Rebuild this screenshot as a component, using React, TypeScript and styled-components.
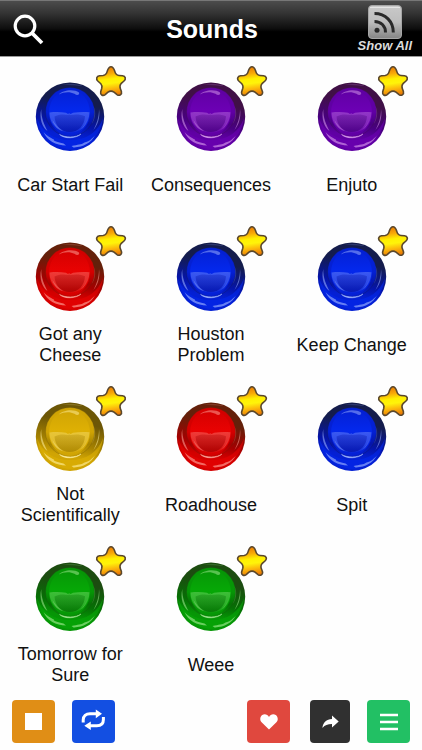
import React, { useId } from 'react';
import styled, { createGlobalStyle } from 'styled-components';

const GlobalStyle = createGlobalStyle`
  *, *::before, *::after { box-sizing: border-box; }
  body {
    margin: 0;
    background: #fefefe;
    color: #111;
    font-family: "Liberation Sans", Helvetica, Arial, sans-serif;
  }
  button { font: inherit; color: inherit; border: 0; padding: 0; background: none; cursor: pointer; }
  svg { display: block; }
`;

const Screen = styled.div`
  display: flex;
  flex-direction: column;
  min-height: 100vh;
`;

const Header = styled.header`
  display: grid;
  grid-template-columns: 1fr auto 1fr;
  align-items: center;
  height: 57px;
  padding: 0 10px 0 12px;
  color: #fff;
  border-top: 1px solid #777;
  border-bottom: 1px solid #999;
  background: linear-gradient(#4c4c4c 0%, #343434 22%, #0e0e0e 50%, #000 56%, #000 100%);
`;

const Title = styled.h1`
  margin: 0;
  font-size: 25px;
  line-height: 30px;
  font-weight: 700;
`;

const SearchButton = styled.button`
  justify-self: start;
`;

const ShowAllButton = styled.button`
  justify-self: end;
  display: flex;
  flex-direction: column;
  align-items: center;
  color: #dcdcdc;
  font-size: 13px;
  line-height: 13px;
  font-weight: 700;
  font-style: italic;
`;

const SoundGrid = styled.main`
  display: grid;
  grid-template-columns: repeat(3, 1fr);
  grid-auto-rows: 160px;
`;

const SoundButton = styled.button`
  display: flex;
  flex-direction: column;
  align-items: center;
  justify-content: flex-start;
  gap: 11px;
  padding-top: 25px;
`;

const GemBox = styled.span`
  position: relative;
  width: 70px;
  height: 70px;
`;

const StarBadge = styled.span`
  position: absolute;
  top: -17px;
  right: -22px;
`;

const Label = styled.span`
  display: flex;
  align-items: center;
  justify-content: center;
  max-width: 126px;
  height: 44px;
  font-size: 18px;
  line-height: 21px;
  text-align: center;
`;

const Footer = styled.footer`
  display: flex;
  justify-content: space-between;
  padding: 3px 12px 7px;
`;

const Group = styled.div<{ $gap: number }>`
  display: flex;
  gap: ${(p) => p.$gap}px;
`;

const ToolButton = styled.button<{ $color: string; $width?: number }>`
  display: grid;
  place-items: center;
  width: ${(p) => p.$width ?? 43}px;
  height: 43px;
  border-radius: 4px;
  color: #fff;
  background: ${(p) => p.$color};
`;

type Hue = 'blue' | 'purple' | 'red' | 'gold' | 'green';

const hues: Record<Hue, { rim: string; deep: string; base: string; glow: string; shine: string }> = {
  blue: { rim: '#141c4c', deep: '#0514a8', base: '#0420d4', glow: '#0428ec', shine: '#a4b8ff' },
  purple: { rim: '#401046', deep: '#480080', base: '#6000a4', glow: '#6c00b4', shine: '#dca0ee' },
  red: { rim: '#64200a', deep: '#a40000', base: '#d40000', glow: '#e80202', shine: '#ffaaa0' },
  gold: { rim: '#6c5606', deep: '#a68200', base: '#d0a404', glow: '#deb004', shine: '#fff0a0' },
  green: { rim: '#1c4c10', deep: '#057004', base: '#069606', glow: '#06a806', shine: '#a8eb98' },
};

function Gem({ hue }: { hue: Hue }) {
  const id = useId();
  const c = hues[hue];
  return (
    <svg width="70" height="70" viewBox="0 0 70 70" aria-hidden="true">
      <defs>
        <linearGradient id={`${id}o`} x1="0.6" y1="0" x2="0.4" y2="1">
          <stop offset="0" stopColor={c.rim} />
          <stop offset="0.28" stopColor={c.rim} />
          <stop offset="0.6" stopColor={c.deep} />
          <stop offset="0.78" stopColor={c.base} />
          <stop offset="1" stopColor={c.base} />
        </linearGradient>
        <linearGradient id={`${id}r`} x1="0" y1="0" x2="0" y2="1">
          <stop offset="0" stopColor={c.base} />
          <stop offset="0.5" stopColor={c.base} />
          <stop offset="0.75" stopColor={c.deep} />
          <stop offset="1" stopColor={c.base} />
        </linearGradient>
        <linearGradient id={`${id}d`} x1="0" y1="0" x2="0" y2="1">
          <stop offset="0" stopColor={c.base} />
          <stop offset="0.45" stopColor={c.glow} />
          <stop offset="1" stopColor={c.base} />
        </linearGradient>
        <linearGradient id={`${id}b`} x1="0" y1="0" x2="0" y2="1">
          <stop offset="0" stopColor={c.shine} stopOpacity="0.34" />
          <stop offset="0.6" stopColor={c.shine} stopOpacity="0.24" />
          <stop offset="1" stopColor={c.shine} stopOpacity="0.06" />
        </linearGradient>
        <linearGradient id={`${id}p`} x1="0" y1="0" x2="0" y2="1">
          <stop offset="0" stopColor={c.deep} stopOpacity="0.3" />
          <stop offset="1" stopColor={c.deep} stopOpacity="0.75" />
        </linearGradient>
      </defs>
      <circle cx="35" cy="34.7" r="34.2" fill={`url(#${id}o)`} />
      <path d="M2 36C4 54 18 66 35 67C52 66 66 54 68 36C63 50 52 58 35 58C18 58 7 50 2 36Z" fill={c.glow} opacity="0.6" />
      <circle cx="35" cy="30" r="24.5" fill={`url(#${id}r)`} stroke={c.rim} strokeOpacity="0.3" />
      <ellipse cx="34.5" cy="30.6" rx="20.5" ry="23" fill={`url(#${id}d)`} />
      <path d="M14.5 30.6C20 29.8 26 30 31 30.8L33 32L34.2 31.2L35.6 32L38 30.8C43 30 48 29.8 54.5 30.2C54 43 46 50.5 34.5 50.5C23 50.5 14.5 42 14.5 30.6Z" fill={`url(#${id}b)`} />
      <path d="M19.5 34.5C23 32.4 29 32 33 33L34.2 32.4L35.6 33C40 32 46 32.2 50 34.2C49.5 43.5 43.5 50 34.5 50C26 50 20 43.5 19.5 34.5Z" fill={`url(#${id}p)`} />
      <path d="M17.5 38C19 44 23 48 28 49C23.5 46 20 42 17.5 38ZM52 37C50.5 43 47 47 43 49C47.5 47.5 51 43 52 37Z" fill={c.shine} opacity="0.35" />
      <path d="M24 12.5C27 8.4 39 6.6 44 10.6C45 13 42 14 39.5 11.8C34.5 9.2 28.5 10 24 12.5Z" fill={c.shine} opacity="0.5" />
      <path d="M24.5 52.4C30 55.8 41 55.8 46 52C41 56.8 29 57.2 24.5 52.4Z" fill={c.shine} stroke={c.shine} strokeWidth="0.5" />
      <path d="M6.3 27C3.8 36 7.5 46 12.5 49C9.4 43 6 36 6.3 27ZM64 27C65.6 36 62 44 58.5 48C61.4 42 64 36 64 27Z" fill={c.shine} opacity="0.55" />
      <path d="M58.5 24C60.5 32 58.5 38 56.5 42C59.6 39 62 31 58.5 24Z" fill={c.shine} opacity="0.2" />
      <path d="M8.5 50C12 54.5 16 55.6 19 57.6C17.5 58.8 23 60.6 28.5 61.4L31 63.4C21 63.4 12 58.5 8.5 50Z" fill={c.shine} opacity="0.62" />
      <path d="M36.5 64C43 62.2 46 63 49.5 60.4C54 60 57 56.6 60 53.6C56 61 48 65.6 38.5 65.4Z" fill={c.shine} opacity="0.62" />
      <path d="M27 3C34 1.6 43 2 48 4C41 3 34 2.8 27 3Z" fill={c.shine} opacity="0.25" />
    </svg>
  );
}

function Star() {
  const id = useId();
  return (
    <svg width="32" height="32" viewBox="0 0 32 32" aria-hidden="true">
      <defs>
        <linearGradient id={id} x1="0.4" y1="0" x2="0.55" y2="1">
          <stop offset="0" stopColor="#e87800" />
          <stop offset="0.24" stopColor="#f8aa08" />
          <stop offset="0.43" stopColor="#fff000" />
          <stop offset="0.58" stopColor="#fff30a" />
          <stop offset="0.78" stopColor="#fbb40c" />
          <stop offset="1" stopColor="#e87404" />
        </linearGradient>
      </defs>
      <path
        d="M16 1.8C18.4 1.8 19 4 19.8 6.4C20.5 9 21.5 10.3 24 10.5L27.5 10.8C30.6 11.2 31.2 14 29 16L26 18.7C24.7 20 24.7 21.5 25.3 23.6L26.4 26.5C27.3 29.6 24.3 31.2 22 29.6L19 27.2C17 25.8 15 25.8 13 27.2L10.2 29.6C7.8 31.4 5 29.8 5.7 26.7L6.7 23.5C7.3 21.4 7 20 5.8 18.7L2.8 16C.7 14 1.6 11.1 4.5 10.8L8 10.5C10.4 10.2 11.5 9 12.2 6.4C13 4 13.6 1.8 16 1.8Z"
        fill={`url(#${id})`}
        stroke="#59472c"
        strokeWidth="1.6"
      />
    </svg>
  );
}

function SearchIcon() {
  return (
    <svg width="32" height="32" viewBox="0 0 32 32" fill="none" stroke="#fff" aria-hidden="true">
      <circle cx="13" cy="13" r="9.8" strokeWidth="3.2" />
      <path d="M20 20L30 30" strokeWidth="3.8" />
    </svg>
  );
}

function FeedIcon() {
  return (
    <svg width="34" height="34" viewBox="0 0 34 34" aria-hidden="true">
      <defs>
        <linearGradient id="feed" x1="0" y1="0" x2="0" y2="1">
          <stop offset="0" stopColor="#c9c9c9" />
          <stop offset="0.5" stopColor="#bdbdbd" />
          <stop offset="1" stopColor="#858585" />
        </linearGradient>
      </defs>
      <rect x="0.5" y="0.5" width="33" height="33" rx="3.5" fill="url(#feed)" stroke="#a6a6a6" />
      <path d="M2 2.5H32" stroke="#e4e4e4" />
      <circle cx="9" cy="25.2" r="2.5" fill="#292929" />
      <path d="M6.5 16.5C13 16.5 17.5 21 17.5 27.5M6.5 8.6C17.5 8.6 25.3 16.5 25.3 27.5" fill="none" stroke="#292929" strokeWidth="3" />
    </svg>
  );
}

function StopIcon() {
  return (
    <svg width="17" height="17" viewBox="0 0 17 17" aria-hidden="true">
      <rect width="17" height="17" fill="#fff" />
    </svg>
  );
}

function RepeatIcon() {
  return (
    <svg width="43" height="43" viewBox="0 0 43 43" aria-hidden="true">
      <g fill="none" stroke="#fff" strokeWidth="3">
        <path d="M11.2 22.5V20C11.2 16 14 13.8 18 13.8H25" />
        <path d="M31.4 17V19.5C31.4 23.6 28.8 25.8 24.8 25.8H18" />
      </g>
      <path d="M23.8 9.5L30 13.8L23.8 18.2ZM18.8 21.4L12.3 25.8L18.8 30Z" fill="#fff" />
    </svg>
  );
}

function HeartIcon() {
  return (
    <svg width="18" height="16" viewBox="0 0 18 16" aria-hidden="true">
      <path d="M9 15.6L1.6 8.3C-.5 6 0 2.6 2.2 1.1C4.6-.4 7.6.4 9 3.1C10.4.4 13.4-.4 15.8 1.1C18 2.6 18.5 6 16.4 8.3Z" fill="#fff" />
    </svg>
  );
}

function ShareIcon() {
  return (
    <svg width="17" height="14" viewBox="0 0 17 14" aria-hidden="true">
      <path d="M10 .5L16.7 6.6L10 12.6V9C5.5 9 3 10 .4 13C1 7.5 4.4 4.4 10 4Z" fill="#fff" />
    </svg>
  );
}

function MenuIcon() {
  return (
    <svg width="18" height="18" viewBox="0 0 18 18" aria-hidden="true">
      <path d="M0 2H18M0 9H18M0 16H18" stroke="#fff" strokeWidth="2.6" />
    </svg>
  );
}

const sounds: { name: string; hue: Hue }[] = [
  { name: 'Car Start Fail', hue: 'blue' },
  { name: 'Consequences', hue: 'purple' },
  { name: 'Enjuto', hue: 'purple' },
  { name: 'Got any Cheese', hue: 'red' },
  { name: 'Houston Problem', hue: 'blue' },
  { name: 'Keep Change', hue: 'blue' },
  { name: 'Not Scientifically', hue: 'gold' },
  { name: 'Roadhouse', hue: 'red' },
  { name: 'Spit', hue: 'blue' },
  { name: 'Tomorrow for Sure', hue: 'green' },
  { name: 'Weee', hue: 'green' },
];

export default function App() {
  return (
    <Screen>
      <GlobalStyle />
      <Header>
        <SearchButton aria-label="Search"><SearchIcon /></SearchButton>
        <Title>Sounds</Title>
        <ShowAllButton>
          <FeedIcon />
          Show All
        </ShowAllButton>
      </Header>
      <SoundGrid>
        {sounds.map((s) => (
          <SoundButton key={s.name}>
            <GemBox>
              <Gem hue={s.hue} />
              <StarBadge><Star /></StarBadge>
            </GemBox>
            <Label>{s.name}</Label>
          </SoundButton>
        ))}
      </SoundGrid>
      <Footer>
        <Group $gap={17}>
          <ToolButton $color="#e08e16" aria-label="Stop"><StopIcon /></ToolButton>
          <ToolButton $color="#134fe2" aria-label="Repeat"><RepeatIcon /></ToolButton>
        </Group>
        <Group $gap={20}>
          <ToolButton $color="#e0483e" aria-label="Favourites"><HeartIcon /></ToolButton>
          <Group $gap={17}>
            <ToolButton $color="#303030" $width={40} aria-label="Share"><ShareIcon /></ToolButton>
            <ToolButton $color="#22c064" aria-label="Menu"><MenuIcon /></ToolButton>
          </Group>
        </Group>
      </Footer>
    </Screen>
  );
}
